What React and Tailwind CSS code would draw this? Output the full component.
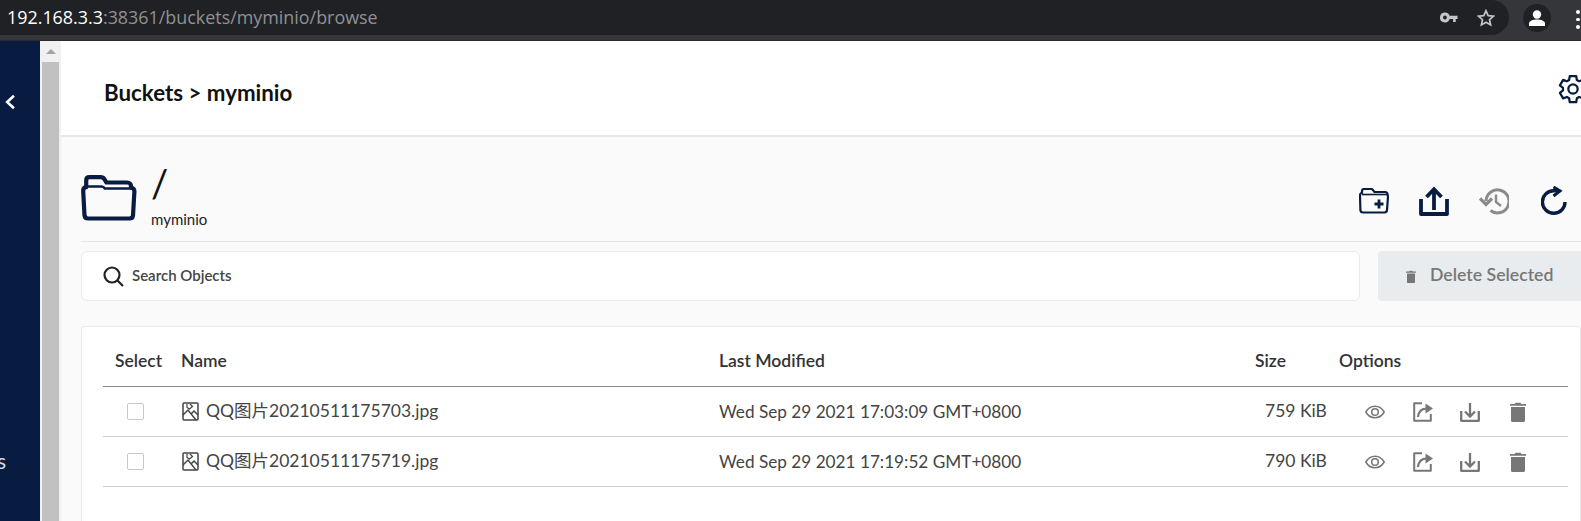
import React from 'react';

const lato = "font-['Lato','Noto_Sans_CJK_SC',sans-serif]";

const KeyIcon = () => (
  <svg width="18" height="11" viewBox="0 0 20 12" className="text-[#c4c5c7]" fill="currentColor">
    <path fillRule="evenodd" d="M5.5 0.5a5.5 5.5 0 0 1 5.2 3.5H19.500v3.800h-2V11h-3V7.800h-3.800A5.500 5.500 0 1 1 5.500 0.500zm0 3.400a2.100 2.100 0 1 0 0 4.200a2.100 2.100 0 0 0 0-4.200z" />
  </svg>
);

const StarIcon = () => (
  <svg width="18" height="18" viewBox="0 0 18 18" fill="none" stroke="#c4c5c7" strokeWidth="1.700">
    <path d="M9 1.800l2.200 4.900 5.200.5-3.900 3.500 1.100 5.200L9 13.200l-4.600 2.700 1.100-5.200-3.900-3.500 5.200-.5z" />
  </svg>
);

const UserIcon = () => (
  <svg width="18" height="18" viewBox="0 0 18 18" fill="#fff">
    <circle cx="9" cy="5.500" r="4.200" />
    <path d="M1 17v-2.500c0-2.500 4-4 8-4s8 1.500 8 4V17z" />
  </svg>
);

const BrowserBar = () => (
  <div className="flex h-[41px] shrink-0 bg-[#35363a] border-b border-[#2a2b2e]">
    <div className="flex h-[35px] w-[1509px] shrink-0 items-center justify-between rounded-r-[18px] bg-[#202124] pl-[7px] pr-[14px]">
      <div className="font-['Open_Sans',sans-serif] text-[17.900px] leading-none text-[#8f9194]">
        <span className="text-white">192.168.3.3</span>:38361/buckets/myminio/browse
      </div>
      <div className="flex items-center gap-[19px]">
        <KeyIcon />
        <StarIcon />
      </div>
    </div>
    <div className="ml-[14px] flex h-[28px] w-[28px] mt-[4px] shrink-0 items-center justify-center rounded-full bg-[#202124]">
      <UserIcon />
    </div>
    <div className="ml-[25px] mt-[10px] flex flex-col gap-[4px]">
      <span className="h-[3.500px] w-[3.500px] rounded-full bg-white" />
      <span className="h-[3.500px] w-[3.500px] rounded-full bg-white" />
      <span className="h-[3.500px] w-[3.500px] rounded-full bg-white" />
    </div>
  </div>
);

const Sidebar = () => (
  <div className={`flex w-[40px] shrink-0 flex-col overflow-hidden bg-[#081c42] text-white ${lato}`}>
    <svg width="14" height="18" viewBox="0 0 12 16" fill="none" stroke="#fff" strokeWidth="2.300" className="ml-[3px] mt-[52px]">
      <path d="M9.500 2.500L3.500 8l6 5.500" />
    </svg>
    <div className="mt-[338px] flex w-[6px] justify-end overflow-hidden text-[21px] leading-6 text-[#d5d9e2]">
      <span className="shrink-0">s</span>
    </div>
  </div>
);

const Scrollbar = () => (
  <div className="flex w-[21px] shrink-0 flex-col bg-[#f1f1f1] pl-[2px] pr-[2px]">
    <div className="flex h-[21px] items-center justify-center">
      <span className="h-0 w-0 border-x-[5px] border-b-[5px] border-x-transparent border-b-[#a3a3a3]" />
    </div>
    <div className="flex-1 bg-[#c1c1c1]" />
  </div>
);

const GearIcon = () => (
  <svg width="32" height="32" viewBox="0 0 24 24" fill="none" stroke="#081c42" strokeWidth="1.700" strokeLinejoin="round" className="shrink-0">
    <path d="M9.600 2.300h4.800l.5 2.900 1.700 1 2.800-1 2.400 4.100-2.300 1.900v1.800l2.300 1.900-2.400 4.100-2.800-1-1.700 1-.5 2.900H9.600l-.5-2.900-1.700-1-2.800 1-2.400-4.100 2.300-1.900V11.200L2.200 9.300l2.400-4.100 2.800 1 1.700-1z" />
    <circle cx="12" cy="12" r="3.500" />
  </svg>
);

const FolderIcon = () => (
  <svg width="56" height="46" viewBox="0 0 56 46" fill="none" stroke="#081c42" strokeLinejoin="round">
    <path strokeWidth="4.200" d="M7 43.500c-2 0-3.300-1.300-3.500-3L2.200 16c-.1-2.200 1-3.500 3-3.800V5.500C5.200 3.500 6.500 2.200 8.500 2.200h11c2 0 3.200.8 4 2.200l2 3.100h20.500c2.500 0 4 1.500 4 3.500v1.500c2.200.5 3.500 1.800 3.400 4L52 40.500c-.2 2-1.500 3-3.500 3z" />
    <path strokeWidth="2.600" d="M6 11.500h14.500c1.500 0 2.500.6 3.300 2h26.700" />
  </svg>
);

const NewFolderIcon = () => (
  <svg width="30" height="26" viewBox="0 0 30 26" fill="none" stroke="#081c42" strokeWidth="2.200" strokeLinejoin="round">
    <path d="M4 24.500c-1.500 0-2.500-1-2.600-2.500L1 7.500C1 6 1.700 5 3 5V3c0-1 .8-2 2-2h7c1 0 1.700.5 2.200 1.300L15.500 4H26c1.500 0 2.500 1 2.500 2.500l.5 2-1 13.500c-.1 1.500-1 2.500-2.500 2.500z" />
    <path d="M3 6.500h25" strokeWidth="1.600" />
    <path d="M20 11.500v9M15.500 16h9" stroke="#081c42" strokeWidth="2.800" />
  </svg>
);

const UploadIcon = () => (
  <svg width="30" height="30" viewBox="0 0 30 30" fill="none" stroke="#081c42" strokeWidth="3.800">
    <path d="M2 13v15h26V13" strokeLinejoin="round" />
    <path d="M15 24V4M7.500 11L15 3.200 22.500 11" />
  </svg>
);

const HistoryIcon = () => (
  <svg width="30" height="28" viewBox="0 0 30 28" fill="none" stroke="#8b8b8b" strokeWidth="3">
    <path d="M7 14a11.500 11.500 0 1 1 4.500 9.500" />
    <path d="M1 11.500l6 6 6-6" strokeWidth="3.200" />
    <path d="M17 7.500V15l5 4" strokeWidth="2.400" />
  </svg>
);

const RefreshIcon = () => (
  <svg width="26" height="30" viewBox="0 0 26 30" fill="none" stroke="#081c42" strokeWidth="3.400">
    <path d="M24 16a11.300 11.300 0 1 1-11.500-11.300H18" />
    <path d="M12.500 1l6.500 4-6.500 5" strokeWidth="3" />
  </svg>
);

const SmallTrash = () => (
  <svg width="10" height="13" viewBox="0 0 10 13" fill="#777">
    <path d="M1 3.500h8V12c0 .6-.4 1-1 1H2c-.6 0-1-.4-1-1zM0 1.500h3.200L3.700.8h2.600l.5.700H10v1.200H0z" />
  </svg>
);

const ImageIcon = () => (
  <svg width="17" height="19" viewBox="0 0 17 19" fill="none" stroke="#444" strokeWidth="1.500" className="shrink-0">
    <rect x="1" y="1" width="15" height="17" rx="1" />
    <path d="M5 2v3.500l2.500 1.500 3-2.500L8 2" strokeWidth="1.200" />
    <path d="M1 13l5-5 8 10M9 12l3-3 4 4" />
  </svg>
);

const EyeIcon = () => (
  <svg width="20" height="14" viewBox="0 0 20 14" fill="none" stroke="#777" strokeWidth="1.500">
    <path d="M.8 7C3 3.200 6.200 1.200 10 1.200S17 3.200 19.200 7C17 10.800 13.800 12.800 10 12.800S3 10.800.8 7z" />
    <circle cx="10" cy="7" r="3.300" />
  </svg>
);

const ShareIcon = () => (
  <svg width="20" height="20" viewBox="0 0 20 20" fill="none" stroke="#777" strokeWidth="2">
    <path d="M9 1.200H1.200v17.600h16.600V12" strokeLinejoin="round" />
    <path d="M5 15c.5-5 3.500-8.500 9-8.500" strokeWidth="2.200" />
    <path d="M12.500 1.500L20 6.500 12.500 11.500z" fill="#777" stroke="none" />
  </svg>
);

const DownloadIcon = () => (
  <svg width="20" height="20" viewBox="0 0 20 20" fill="none" stroke="#777" strokeWidth="2.300">
    <path d="M1.200 9v9.800h17.600V9" strokeLinejoin="round" />
    <path d="M10 1v13M5 9.500l5 5 5-5" />
  </svg>
);

const TrashIcon = () => (
  <svg width="16" height="20" viewBox="0 0 16 20" fill="#777">
    <path d="M1 5h14v13.500c0 .9-.6 1.500-1.500 1.500h-11C1.600 20 1 19.400 1 18.500zM0 2h4.800l.7-1.200h5l.7 1.200H16v1.800H0z" />
  </svg>
);

const rows = [
  { name: 'QQ图片20210511175703.jpg', date: 'Wed Sep 29 2021 17:03:09 GMT+0800', size: '759 KiB' },
  { name: 'QQ图片20210511175719.jpg', date: 'Wed Sep 29 2021 17:19:52 GMT+0800', size: '790 KiB' },
];

const ObjectTable = () => (
  <div className={`mt-[25px] flex-1 rounded-t-[4px] border border-b-0 border-[#eaeaea] bg-white pl-[21px] pr-[12px] ${lato}`}>
    <div className="flex h-[60px] items-center border-b border-[#8a8a8a] pt-[10px] text-[17.500px] font-semibold text-[#333]">
      <div className="w-[78px] pl-[12px]">Select</div>
      <div className="w-[538px]">Name</div>
      <div className="w-[536px]">Last Modified</div>
      <div className="w-[84px]">Size</div>
      <div>Options</div>
    </div>
    {rows.map((row) => (
      <div key={row.name} className="flex h-[50px] items-center border-b border-[#cfcfcf] text-[17.200px] text-[#444]">
        <div className="w-[78px] pl-[24px]">
          <div className="h-[17px] w-[17px] rounded-[2px] border border-[#c9c9c9] bg-white" />
        </div>
        <div className="flex w-[538px] items-center gap-[7px] pl-[1px]">
          <ImageIcon />
          <span className="text-[17.500px]">{row.name}</span>
        </div>
        <div className="w-[536px]">{row.date}</div>
        <div className="w-[84px] pl-[10px] whitespace-nowrap text-[17.500px]">{row.size}</div>
        <div className="ml-[26px] flex items-center">
          <div className="w-[48px]"><EyeIcon /></div>
          <div className="w-[47px]"><ShareIcon /></div>
          <div className="w-[50px]"><DownloadIcon /></div>
          <TrashIcon />
        </div>
      </div>
    ))}
  </div>
);

export default function App() {
  return (
    <div className="flex h-[521px] w-[1581px] flex-col overflow-hidden bg-white">
      <BrowserBar />
      <div className="flex min-h-0 flex-1">
        <Sidebar />
        <Scrollbar />
        <main className={`flex min-w-0 flex-1 flex-col ${lato}`}>
          <header className="flex h-[96px] shrink-0 items-center justify-between border-b-2 border-[#e8e8e8] pl-[43px] pt-[9px]">
            <h1 className="text-[22.300px] font-bold text-[#111]">Buckets &gt; myminio</h1>
            <div className="-mr-[8px] -mt-[8px]"><GearIcon /></div>
          </header>
          <div className="flex min-h-0 flex-1 flex-col bg-[#fafafa] pl-[20px]">
            <div className="flex h-[105px] shrink-0 items-center border-b border-[#e5e5e5] pr-[14px] pt-[18px]">
              <FolderIcon />
              <div className="ml-[14px] flex flex-col -mt-[5px]">
                <span className="text-[38px] leading-[40px] text-[#111]">/</span>
                <span className="mt-[7px] text-[15px] leading-[18px] text-[#222]">myminio</span>
              </div>
              <div className="ml-auto flex items-center mt-[6px]">
                <div className="mr-[30px]"><NewFolderIcon /></div>
                <div className="mr-[30px]"><UploadIcon /></div>
                <div className="mr-[32px]"><HistoryIcon /></div>
                <RefreshIcon />
              </div>
            </div>
            <div className="mt-[9px] flex h-[50px] shrink-0">
              <div className="flex w-[1279px] items-center rounded-[6px] border border-[#ebebeb] bg-white pl-[21px]">
                <svg width="21" height="21" viewBox="0 0 21 21" fill="none" stroke="#222" strokeWidth="2.200">
                  <circle cx="9" cy="9" r="7.500" />
                  <path d="M14.500 14.500l5.500 5.500" />
                </svg>
                <span className="ml-[8px] -mt-[2px] text-[15px] font-semibold text-[#444]">Search Objects</span>
              </div>
              <div className="ml-[18px] flex flex-1 items-center rounded-l-[4px] bg-[#e9ecee] pl-[28px] text-[17.700px] font-semibold text-[#777]">
                <SmallTrash />
                <span className="ml-[14px] -mt-[2px]">Delete Selected</span>
              </div>
            </div>
            <ObjectTable />
          </div>
        </main>
      </div>
    </div>
  );
}
